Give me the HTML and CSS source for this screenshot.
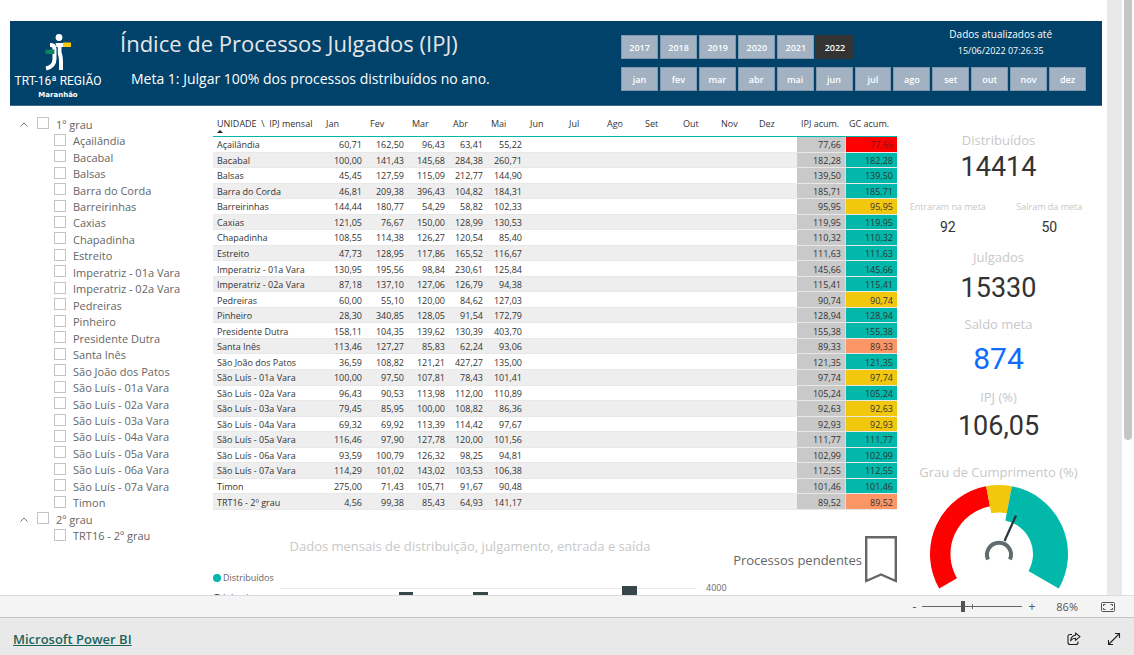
FILE: index.html
```html
<!DOCTYPE html>
<html lang="pt-BR">
<head>
<meta charset="utf-8">
<meta name="viewport" content="width=device-width, initial-scale=1">
<title>Índice de Processos Julgados (IPJ)</title>
<link rel="stylesheet" href="styles.css">
</head>
<body>
<div class="viewport">
  <div class="report">
    <header class="banner">
      <div class="logo">
        <svg class="logo-mark" width="30" height="38" viewBox="0 0 30 38" fill="none" aria-hidden="true">
          <circle cx="16" cy="4.500" r="3.400" fill="#fff"/>
          <path d="M7 12H8Q11.500 12 11.500 16V26Q11.500 33.500 3 35.500" stroke="#fff" stroke-width="4"/>
          <path d="M12.500 10H20V14H18.500V19Q20 23 20 28V37H16V28Q16 24 14.800 21V14H13.500Z" fill="#fff"/>
          <path d="M20 9.500H28V14H20Z" fill="#fdc80a"/>
          <path d="M2.500 16.500H11.500V21H2.500Z" fill="#0a8561"/>
        </svg>
        <span class="logo-name">TRT-16ª REGIÃO</span>
        <span class="logo-state">Maranhão</span>
      </div>
      <div class="headings">
        <h1>Índice de Processos Julgados (IPJ)</h1>
        <p>Meta 1: Julgar 100% dos processos distribuídos no ano.</p>
      </div>
      <div class="filters">
        <div class="filter-row">
          <div class="years">
            <button type="button">2017</button><button type="button">2018</button><button type="button">2019</button><button type="button">2020</button><button type="button">2021</button><button type="button" class="selected">2022</button>
          </div>
          <p class="updated">Dados atualizados até<br><time>15/06/2022 07:26:35</time></p>
        </div>
        <div class="months">
          <button type="button">jan</button><button type="button">fev</button><button type="button">mar</button><button type="button">abr</button><button type="button">mai</button><button type="button">jun</button><button type="button">jul</button><button type="button">ago</button><button type="button">set</button><button type="button">out</button><button type="button">nov</button><button type="button">dez</button>
        </div>
      </div>
    </header>

    <div class="content">
      <ul class="units" id="units"></ul>

      <main class="center">
        <table class="matrix">
          <colgroup>
            <col class="c-unit"><col class="c-jan"><col class="c-fev"><col class="c-mar"><col class="c-abr"><col class="c-month"><col class="c-month"><col class="c-late"><col class="c-late"><col class="c-late"><col class="c-late"><col class="c-late"><col class="c-dez"><col class="c-ipj"><col class="c-gc">
          </colgroup>
          <thead>
            <tr><th class="sorted">UNIDADE &nbsp;\ &nbsp;IPJ mensal</th><th>Jan</th><th>Fev</th><th>Mar</th><th>Abr</th><th>Mai</th><th>Jun</th><th>Jul</th><th>Ago</th><th>Set</th><th>Out</th><th>Nov</th><th>Dez</th><th>IPJ acum.</th><th>GC acum.</th></tr>
          </thead>
          <tbody id="rows"></tbody>
        </table>
        <div class="lower">
          <section class="monthly">
            <h2>Dados mensais de distribuição, julgamento, entrada e saída</h2>
            <div class="chart">
              <ul class="legend">
                <li><span class="dot dot-teal"></span>Distribuídos</li>
                <li><span class="dot dot-dark"></span>Julgados</li>
              </ul>
              <svg class="plot" viewBox="0 0 417 40" preserveAspectRatio="none" aria-hidden="true">
                <path d="M0 20.500H417" stroke="#ebebeb" stroke-width="1"/>
                <path d="M119 24h14v16h-14zM193 24h15v16h-15zM342 18h15v22h-15z" fill="#374649"/>
              </svg>
              <span class="axis">4000</span>
            </div>
          </section>
          <a class="pending" href="#pendentes">Processos pendentes
            <svg width="32" height="47" viewBox="0 0 32 47" aria-hidden="true"><path d="M1.200 1.200H30.800V45L16 38.500L1.200 45Z" fill="none" stroke="#666" stroke-width="2.400"/></svg>
          </a>
        </div>
      </main>

      <aside class="kpis">
        <div class="kpi"><span>Distribuídos</span><strong>14414</strong></div>
        <div class="kpi-pair">
          <div><span>Entraram na meta</span><strong>92</strong></div>
          <div><span>Saíram da meta</span><strong>50</strong></div>
        </div>
        <div class="kpi roomy"><span>Julgados</span><strong>15330</strong></div>
        <div class="kpi balance"><span>Saldo meta</span><strong>874</strong></div>
        <div class="kpi ratio"><span>IPJ (%)</span><strong>106,05</strong></div>
        <div class="kpi gauge"><span>Grau de Cumprimento (%)</span>
          <svg width="140" height="106" viewBox="0 0 140 106" fill="none" aria-hidden="true">
            <path d="M19.100 99.400A58.750 58.750 0 0 1 59.100 12.300" stroke="#fd0100" stroke-width="20.500"/>
            <path d="M59.700 15.700A55.250 55.250 0 0 1 80.300 15.700" stroke="#f2c80f" stroke-width="27.500"/>
            <path d="M79.600 19.400A51.500 51.500 0 0 1 114.600 95.750" stroke="#01b8aa" stroke-width="35"/>
            <path d="M59 75.500A12 12 0 1 1 81 75.500" stroke="#5f6b6d" stroke-width="4"/>
            <path d="M75.500 57L87 31.500" stroke="#293537" stroke-width="2.200"/>
          </svg>
        </div>
      </aside>
    </div>
  </div>
  <div class="gutter"></div>
  <div class="scrollbar"><div class="thumb"></div></div>
</div>

<div class="zoombar">
  <button type="button" aria-label="Reduzir">-</button>
  <input type="range" class="zoom" min="10" max="200" value="86" aria-label="Zoom">
  <button type="button" aria-label="Ampliar">+</button>
  <output class="percent">86%</output>
  <button type="button" aria-label="Ajustar à página">
    <svg width="14" height="10" viewBox="0 0 14 10" fill="none" stroke="#555" aria-hidden="true"><rect x=".5" y=".5" width="13" height="9" rx="1"/><path d="M2.500 4V2.500H4.500M9.500 2.500H11.500V4M11.500 6V7.500H9.500M4.500 7.500H2.500V6"/></svg>
  </button>
</div>

<footer class="footer">
  <a href="#powerbi">Microsoft Power BI</a>
  <div class="actions">
    <button type="button" aria-label="Compartilhar">
      <svg width="14" height="14" viewBox="0 0 14 14" fill="none" stroke="#222" stroke-width="1.100" stroke-linejoin="round" aria-hidden="true"><path d="M5 2.500H3Q1 2.500 1 4.500V10.500Q1 12.500 3 12.500H9Q11 12.500 11 10.500V9.500"/><path d="M8.500 1L13 4.700L8.500 8.400V6.300Q5.500 6.200 3.700 8.700Q4 3.700 8.500 3.200Z"/></svg>
    </button>
    <button type="button" aria-label="Tela inteira">
      <svg width="14" height="14" viewBox="0 0 14 14" fill="none" stroke="#222" stroke-width="1.100" aria-hidden="true"><path d="M1.500 12.500L12.500 1.500M8 1.500H12.500V6M1.500 8V12.500H6"/></svg>
    </button>
  </div>
</footer>
<script src="app.js"></script>
</body>
</html>
```

FILE: styles.css
```css
* { box-sizing: border-box; }

body {
  margin: 0;
  height: 100vh;
  display: flex;
  flex-direction: column;
  font-family: "Open Sans", "Noto Sans", sans-serif;
  color: #333;
  background: #fff;
}

h1, h2, p, ul { margin: 0; padding: 0; font-weight: 400; list-style: none; }
button { border: 0; padding: 0; background: none; font: inherit; color: inherit; cursor: pointer; }
svg { display: block; flex: none; }

.viewport { flex: 1; min-height: 0; display: flex; }
.report { flex: 1; min-width: 0; overflow: hidden; padding: 21px 5px 0 10px; }
.gutter { width: 15px; background: #e9e9e9; }
.scrollbar { width: 12px; padding: 0 2px; }
.thumb { height: 74%; background: #c6c6c6; border-radius: 0 0 4px 4px; }

/* Banner */
.banner {
  display: flex;
  min-height: 85px;
  background: #01426a;
  border-bottom: 1px solid #3d6c8b;
  color: #fff;
}
.logo { width: 96px; display: flex; flex-direction: column; align-items: center; padding-top: 12px; }
.logo-name { font: 12px/20px Roboto, sans-serif; white-space: nowrap; }
.logo-state { font: 700 7px/8px "DejaVu Sans", sans-serif; }
.headings { flex: 1; padding: 6px 0 0 14px; white-space: nowrap; }
.headings h1 { font-size: 22px; line-height: 32px; color: #e6e6e6; }
.headings p { font-size: 14px; line-height: 24px; margin: 8px 0 0 11px; }
.filters { width: 465px; margin-right: 16px; padding-top: 5px; font-size: 9px; }
.filter-row { display: flex; align-items: flex-end; justify-content: space-between; }
.years, .months { display: grid; gap: 2px; }
.years { grid-template-columns: repeat(6, 1fr); width: 50%; }
.months { grid-template-columns: repeat(12, 1fr); margin-top: 8px; }
.years button, .months button { height: 24px; background: #a3b2c2; border: 1px solid #7f98ad; color: #fff; font-weight: 600; }
.years .selected { background: #333; border-color: #333; }
.updated { font-size: 10px; line-height: 16px; text-align: center; margin-right: 34px; }
.updated time { font-size: 9px; }

/* Unit tree */
.content { display: grid; grid-template-columns: 203px 1fr 205px; }
.units { height: 428px; margin-top: 10px; display: grid; grid-auto-rows: 1fr; font-size: 11px; color: #666; }
.units li { display: flex; align-items: center; padding-left: 44px; }
.units .group { padding-left: 10px; gap: 9px; }
.units label { display: flex; align-items: center; gap: 7px; white-space: nowrap; }
.units input { appearance: none; width: 12px; height: 12px; margin: 0 0 2px; border: 1px solid #c4c4c4; background: #fff; }

/* Matrix */
.matrix { width: 100%; height: 396px; margin-top: 8px; border-collapse: separate; border-spacing: 0; table-layout: fixed; font-size: 9px; line-height: 12px; }
.c-unit { width: 109px; } .c-jan { width: 44px; } .c-fev { width: 42px; } .c-mar { width: 41px; } .c-abr { width: 38px; }
.c-month { width: 39px; } .c-late { width: 38px; } .c-dez { width: 42px; } .c-ipj { width: 48px; } .c-gc { width: 52px; }
.matrix th, .matrix td { padding: 2px 4px 0; white-space: nowrap; font-weight: 400; text-align: right; }
.matrix thead th { height: 23px; text-align: left; vertical-align: top; padding-top: 4px; border-bottom: 1px solid #01b8aa; }
.matrix .sorted::after { content: ""; display: block; width: 0; border: 3px solid transparent; border-top: 0; border-bottom-color: #222; }
.matrix tbody th { text-align: left; }
.matrix tbody tr:nth-child(even) { background: #eee; }
.matrix tbody th, .matrix tbody td { border-bottom: 1px solid #e8e8e8; }
.matrix .total { background: #c9c9c9; }
.matrix .gc { background: #01b8aa; border-left: 1px solid #ddd; }
.matrix .yellow { background: #f2c80f; }
.matrix .orange { background: #fd9666; }
.matrix .red { background: #fd0100; color: #7d1a12; }

/* Lower section */
.lower { display: flex; justify-content: space-between; padding-top: 26px; }
.monthly { width: 514px; }
.monthly h2 { font-size: 13px; line-height: 20px; color: #c8c8c8; text-align: center; }
.chart { display: flex; align-items: flex-start; margin-top: 12px; font-size: 9px; color: #666; }
.legend { width: 67px; line-height: 20px; }
.legend li { display: flex; align-items: center; gap: 2px; }
.dot { width: 8px; height: 8px; border-radius: 50%; }
.dot-teal { background: #01b8aa; }
.dot-dark { background: #374649; }
.plot { flex: 1; min-width: 0; height: 40px; }
.axis { width: 30px; padding: 13px 0 0 9px; line-height: 14px; }
.pending { display: flex; align-items: center; gap: 3px; height: 47px; font-size: 13px; color: #666; text-decoration: none; white-space: nowrap; }

/* Indicators */
.kpis { display: flex; flex-direction: column; padding: 24px 2px 0 0; text-align: center; color: #c8c8c8; }
.kpis span, .kpis strong { display: block; white-space: nowrap; }
.kpis strong { font-family: Roboto, sans-serif; font-weight: 400; color: #333; }
.kpi { font-size: 13px; line-height: 20px; padding-bottom: 13px; }
.kpi strong { font-size: 27px; line-height: 34px; }
.roomy { padding-bottom: 9px; }
.roomy strong { padding-top: 4px; }
.balance { padding-bottom: 11px; }
.balance strong { padding-top: 8px; font-size: 30px; color: #0f6cfd; }
.ratio strong { padding-top: 2px; }
.kpi-pair { display: grid; grid-template-columns: 1fr 1fr; font-size: 9px; line-height: 16px; padding: 2px 0 8px; }
.kpi-pair strong { font-size: 14px; line-height: 24px; }
.gauge { padding: 6px 0 0; }
.gauge svg { margin: 2px auto 0; }

/* Zoom bar and footer */
.zoombar { height: 23px; display: flex; align-items: center; justify-content: flex-end; gap: 6px; padding-right: 19px; background: #f4f4f4; border-top: 1px solid #dcdcdc; border-bottom: 1px solid #c4c4c4; font-size: 12px; color: #555; }
.zoom {
  appearance: none;
  width: 100px;
  height: 10px;
  margin: 0;
  background:
    linear-gradient(#666, #666) 50px center / 1px 5px no-repeat,
    linear-gradient(#666, #666) center / 100% 1px no-repeat;
}
.zoom::-webkit-slider-thumb { appearance: none; width: 4px; height: 11px; background: #555; }
.percent { margin: 0 17px 0 15px; font-size: 11px; }
.footer { height: 37px; display: flex; align-items: center; justify-content: space-between; padding: 4px 13px 0; background: #e9e9e9; }
.footer a { font-size: 13px; font-weight: 600; color: #1b655a; }
.actions { display: flex; gap: 26px; }
```

FILE: app.js
```js
const rows = [
  ["Açailândia", "60,71", "162,50", "96,43", "63,41", "55,22", "77,66"],
  ["Bacabal", "100,00", "141,43", "145,68", "284,38", "260,71", "182,28"],
  ["Balsas", "45,45", "127,59", "115,09", "212,77", "144,90", "139,50"],
  ["Barra do Corda", "46,81", "209,38", "396,43", "104,82", "184,31", "185,71"],
  ["Barreirinhas", "144,44", "180,77", "54,29", "58,82", "102,33", "95,95"],
  ["Caxias", "121,05", "76,67", "150,00", "128,99", "130,53", "119,95"],
  ["Chapadinha", "108,55", "114,38", "126,27", "120,54", "85,40", "110,32"],
  ["Estreito", "47,73", "128,95", "117,86", "165,52", "116,67", "111,63"],
  ["Imperatriz - 01a Vara", "130,95", "195,56", "98,84", "230,61", "125,84", "145,66"],
  ["Imperatriz - 02a Vara", "87,18", "137,10", "127,06", "126,79", "94,38", "115,41"],
  ["Pedreiras", "60,00", "55,10", "120,00", "84,62", "127,03", "90,74"],
  ["Pinheiro", "28,30", "340,85", "128,05", "91,54", "172,79", "128,94"],
  ["Presidente Dutra", "158,11", "104,35", "139,62", "130,39", "403,70", "155,38"],
  ["Santa Inês", "113,46", "127,27", "85,83", "62,24", "93,06", "89,33"],
  ["São João dos Patos", "36,59", "108,82", "121,21", "427,27", "135,00", "121,35"],
  ["São Luís - 01a Vara", "100,00", "97,50", "107,81", "78,43", "101,41", "97,74"],
  ["São Luís - 02a Vara", "96,43", "90,53", "113,98", "112,00", "110,89", "105,24"],
  ["São Luís - 03a Vara", "79,45", "85,95", "100,00", "108,82", "86,36", "92,63"],
  ["São Luís - 04a Vara", "69,32", "69,92", "113,39", "114,42", "97,67", "92,93"],
  ["São Luís - 05a Vara", "116,46", "97,90", "127,78", "120,00", "101,56", "111,77"],
  ["São Luís - 06a Vara", "93,59", "100,79", "126,32", "98,25", "94,81", "102,99"],
  ["São Luís - 07a Vara", "114,29", "101,02", "143,02", "103,53", "106,38", "112,55"],
  ["Timon", "275,00", "71,43", "105,71", "91,67", "90,48", "101,46"],
  ["TRT16 - 2º grau", "4,56", "99,38", "85,43", "64,93", "141,17", "89,52"]
];

function level(text) {
  const value = parseFloat(text.replace(",", "."));
  if (value < 80) return "red";
  if (value < 90) return "orange";
  return value < 100 ? "yellow" : "";
}

document.getElementById("rows").innerHTML = rows.map(row => {
  const total = row[6];
  const months = row.slice(1, 6).map(v => `<td>${v}</td>`).join("") + "<td></td>".repeat(7);
  return `<tr><th scope="row">${row[0]}</th>${months}<td class="total">${total}</td><td class="gc ${level(total)}">${total}</td></tr>`;
}).join("");

const item = name => `<li><label><input type="checkbox">${name}</label></li>`;
const group = name => `<li class="group"><button type="button" aria-label="Recolher ${name}"><svg width="8" height="5" viewBox="0 0 8 5" fill="none" stroke="#777"><path d="M.5 4.500L4 1L7.500 4.500"/></svg></button><label><input type="checkbox">${name}</label></li>`;
const names = rows.map(row => row[0]);

document.getElementById("units").innerHTML =
  group("1º grau") + names.slice(0, -1).map(item).join("") +
  group("2º grau") + item(names[names.length - 1]);
```
